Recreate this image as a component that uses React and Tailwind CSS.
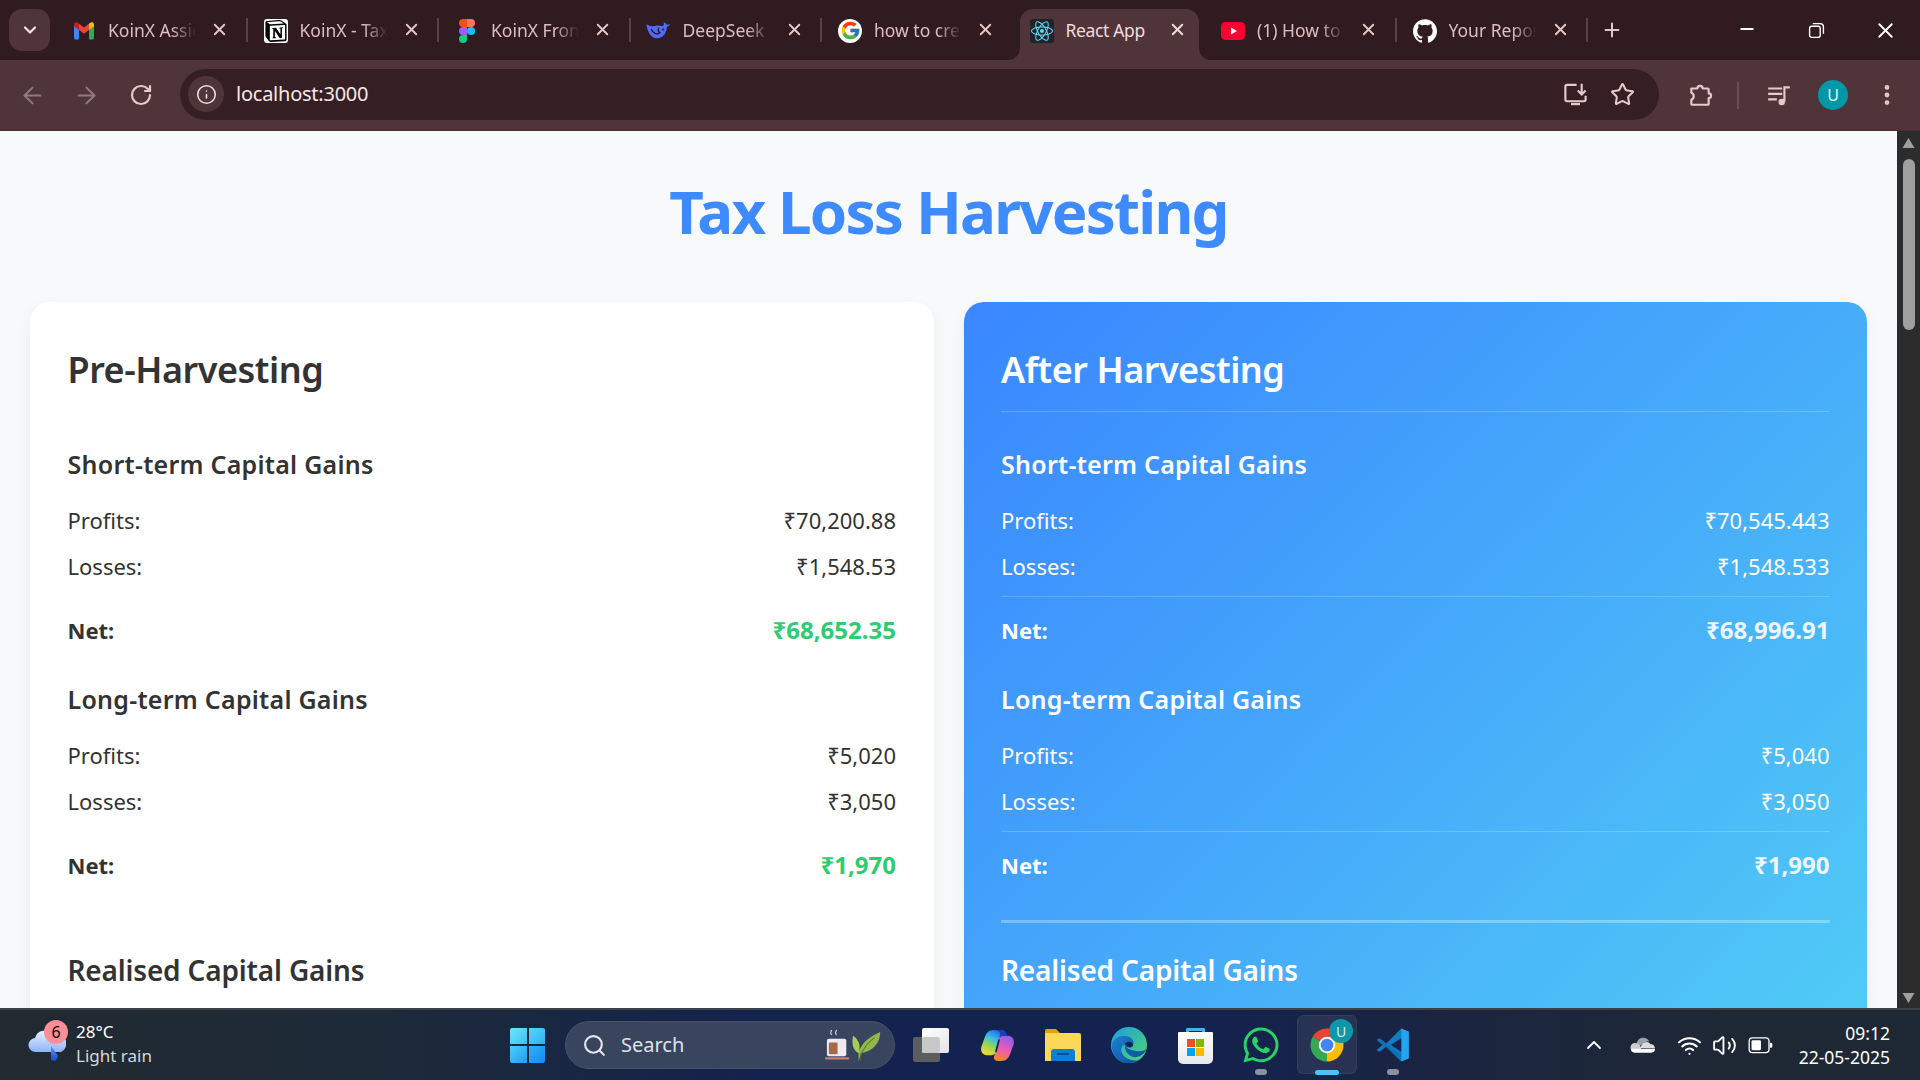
import React from "react";
import {
  ArrowLeft,
  ArrowRight,
  RotateCw,
  Info,
  Star,
  EllipsisVertical,
  Plus,
  X,
  Minus,
  ChevronDown,
  ChevronUp,
  Search,
  Wifi,
  Volume2,
} from "lucide-react";
import { FcGoogle } from "react-icons/fc";
import { FaWhatsapp } from "react-icons/fa";
import { SiNotion, SiReact, SiGithub } from "react-icons/si";

// ── Favicons ───────────────────────────────────────────────────────────────
const GmailIcon = () => (
  <svg viewBox="0 0 24 24" className="w-[24px] h-[24px]">
    <path d="M2 6v13a1.5 1.5 0 0 0 1.5 1.5H7V11z" fill="#4285F4" />
    <path d="M22 6v13a1.5 1.5 0 0 1-1.5 1.5H17V11z" fill="#34A853" />
    <path d="M7 11l5 3.7 5-3.7V4.8l-5 3.7-5-3.7z" fill="#EA4335" />
    <path d="M17 4.8V11l5-3.7V5.5c0-1.9-2.1-2.9-3.6-1.8z" fill="#FBBC04" />
    <path d="M2 5.5v1.8L7 11V4.8L5.6 3.7C4.1 2.6 2 3.6 2 5.5z" fill="#C5221F" />
  </svg>
);

const NotionIcon = () => (
  <div className="w-[24px] h-[24px] bg-white rounded-[3px] flex items-center justify-center">
    <SiNotion size={22} color="#000" />
  </div>
);

const FigmaIcon = () => (
  <svg viewBox="0 0 38 57" className="w-[16px] h-[24px]">
    <path d="M19 28.5a9.5 9.5 0 1 1 19 0 9.5 9.5 0 0 1-19 0z" fill="#1ABCFE" />
    <path d="M0 47.5A9.5 9.5 0 0 1 9.5 38H19v9.5a9.5 9.5 0 1 1-19 0z" fill="#0ACF83" />
    <path d="M19 0v19h9.5a9.5 9.5 0 1 0 0-19H19z" fill="#FF7262" />
    <path d="M0 9.5A9.5 9.5 0 0 0 9.5 19H19V0H9.5A9.5 9.5 0 0 0 0 9.5z" fill="#F24E1E" />
    <path d="M0 28.5A9.5 9.5 0 0 0 9.5 38H19V19H9.5A9.5 9.5 0 0 0 0 28.5z" fill="#A259FF" />
  </svg>
);

const DeepSeekIcon = () => (
  <svg viewBox="0 0 24 24" className="w-[25px] h-[25px]">
    <path
      d="M.5 6c2 1 4 2 6.500 2 3-1 6-1 9 0 1-1 1.500-2 1-4 1.500.5 2.500 1.500 3 2.500 1-.2 2-.5 3-1-.5 1.500-1.500 2.500-3 3 0 5-3 11-9.500 11C5 19.500 1 13 .5 6z"
      fill="#4d6bfe"
    />
    <path d="M5 10.500c1.500 4.500 6 6 8.500 3.500-2-.8-2.500-3-1-4.500" stroke="#2f1b20" strokeWidth="1.300" fill="none" />
    <circle cx="16.500" cy="11" r="1" fill="#2f1b20" />
  </svg>
);

const GoogleIcon = () => (
  <div className="w-[24px] h-[24px] rounded-full bg-white flex items-center justify-center">
    <FcGoogle size={21} />
  </div>
);

const ReactIcon = () => (
  <div className="w-[24px] h-[24px] rounded-[3px] bg-[#20232a] flex items-center justify-center">
    <SiReact size={22} color="#61dafb" />
  </div>
);

const YoutubeIcon = () => (
  <svg viewBox="0 0 24 24" className="w-[24px] h-[24px]">
    <rect x="0" y="3" width="24" height="18" rx="4.500" fill="#ff0033" />
    <path d="M10 8.500v7l6-3.500z" fill="#fff" />
  </svg>
);

const GithubIcon = () => (
  <div className="w-[24px] h-[24px] rounded-full flex items-center justify-center">
    <SiGithub size={24} color="#fff" />
  </div>
);

const TABS = [
  { title: "KoinX Assignment", icon: <GmailIcon /> },
  { title: "KoinX - Tax Loss", icon: <NotionIcon /> },
  { title: "KoinX Frontend", icon: <FigmaIcon /> },
  { title: "DeepSeek", icon: <DeepSeekIcon /> },
  { title: "how to create", icon: <GoogleIcon /> },
  { title: "React App", icon: <ReactIcon />, active: true },
  { title: "(1) How to use", icon: <YoutubeIcon /> },
  { title: "Your Repositories", icon: <GithubIcon /> },
];

// ── Browser chrome ─────────────────────────────────────────────────────────
function Tab({ title, icon, active, hideSep }) {
  return (
    <div className="relative w-[191.5px] h-[51px] shrink-0 flex items-center">
      {active && (
        <div className="absolute left-[6px] right-[6px] top-0 bottom-0 bg-[#4f353a] rounded-t-[13px]">
          <svg viewBox="0 0 12 12" className="absolute -left-[12px] bottom-0 w-[12px] h-[12px]">
            <path d="M12 0v12H0a12 12 0 0 0 12-12z" fill="#4f353a" />
          </svg>
          <svg viewBox="0 0 12 12" className="absolute -right-[12px] bottom-0 w-[12px] h-[12px]">
            <path d="M0 0v12h12A12 12 0 0 1 0 0z" fill="#4f353a" />
          </svg>
        </div>
      )}
      <div className="relative flex items-center w-full h-[42px] pl-[15px] -mt-[8px]">
        <div className="w-[26px] flex items-center justify-center shrink-0">{icon}</div>
        <div
          className={`ml-[11px] w-[88px] overflow-hidden whitespace-nowrap text-[17.5px] ${
            active
              ? "text-[#f0dcdc] tracking-[-0.02em]"
              : "text-[#dcbfc0] [mask-image:linear-gradient(90deg,#000_72%,transparent)]"
          }`}
        >
          {title}
        </div>
        <X size={19} strokeWidth={2.4} className={`ml-[14px] -mt-[2px] ${active ? "text-[#f3dddd]" : "text-[#e6c6c6]"}`} />
      </div>
      {!hideSep && <div className="absolute right-0 top-[9px] h-[24px] w-[2px] bg-[#5a4146]" />}
    </div>
  );
}

function TabStrip() {
  return (
    <div className="h-[60px] bg-[#2f1b20] flex items-start pt-[9px] shrink-0">
      <div className="ml-[9px] w-[41px] h-[42px] rounded-[13px] bg-[#4f353a] flex items-center justify-center shrink-0">
        <ChevronDown size={20} strokeWidth={2.6} className="text-[#f5e6e6]" />
      </div>
      <div className="ml-[6px] flex">
        {TABS.map((t, i) => (
          <Tab key={t.title} {...t} hideSep={t.active || TABS[i + 1]?.active} />
        ))}
      </div>
      <div className="ml-[13px] h-[42px] flex items-center">
        <Plus size={22} strokeWidth={2.2} className="text-[#e6c6c6]" />
      </div>
      <div className="ml-auto h-[42px] flex items-center text-white">
        <div className="w-[70px] flex justify-center -mt-[2px]">
          <Minus size={20} strokeWidth={2.2} />
        </div>
        <div className="w-[68px] flex justify-center">
          <svg viewBox="0 0 16 16" className="w-[17px] h-[17px]" fill="none" stroke="currentColor" strokeWidth="1.300">
            <rect x="1.500" y="4" width="10" height="10.500" rx="2" />
            <path d="M4.500 1.500h7a3 3 0 0 1 3 3V11" />
          </svg>
        </div>
        <div className="w-[70px] flex justify-center">
          <X size={25} strokeWidth={1.8} />
        </div>
      </div>
    </div>
  );
}

function Toolbar() {
  return (
    <div className="h-[71px] bg-[#4f353a] border-b border-[#46303a] flex items-center shrink-0 text-[#e6c9c9]">
      <div className="w-[180px] flex items-center shrink-0 pl-[19px]">
        <ArrowLeft size={27} strokeWidth={1.8} className="text-[#8f7a7d]" />
        <ArrowRight size={27} strokeWidth={1.8} className="ml-[27px] text-[#8f7a7d]" />
        <RotateCw size={24} strokeWidth={2.200} className="ml-[29px]" />
      </div>
      <div className="w-[1479px] h-[51px] rounded-full bg-[#361f24] flex items-center pl-[8px] pr-[24px] -mt-[2px]">
        <div className="w-[36px] h-[36px] rounded-full bg-[#4f353a] flex items-center justify-center">
          <Info size={21} strokeWidth={1.8} className="text-[#f0dfdf]" />
        </div>
        <span className="ml-[12px] text-[20px] tracking-[-0.012em] text-[#f4e9e9]">localhost:3000</span>
        <svg viewBox="0 0 24 24" className="ml-auto w-[27px] h-[27px]" fill="none" stroke="currentColor" strokeWidth="1.900">
          <path d="M13 3.500H4.500a1.500 1.500 0 0 0-1.500 1.500v11.500a1.500 1.500 0 0 0 1.500 1.500h15a1.500 1.500 0 0 0 1.500-1.500V13" />
          <path d="M17.500 2.500v9M14 8.500l3.500 3.500 3.500-3.500" />
          <rect x="8" y="19.500" width="8" height="2" fill="currentColor" stroke="none" />
        </svg>
        <Star size={25} strokeWidth={2} className="ml-[21px]" />
      </div>
      <svg viewBox="0 0 24 24" className="ml-[28px] w-[26px] h-[26px]" fill="none" stroke="currentColor" strokeWidth="2" strokeLinejoin="round">
        <path d="M4 6h5.500a2.500 2.500 0 0 1 5 0H19a1 1 0 0 1 1 1v3.500a2.200 2.200 0 0 1 0 4.400V20a1 1 0 0 1-1 1H5a1 1 0 0 1-1-1v-3.500a3.500 3.500 0 0 0 0-6.500z" />
      </svg>
      <div className="ml-[24px] w-[2px] h-[27px] bg-[#6a5055]" />
      <svg viewBox="0 0 24 24" className="ml-[27px] w-[26px] h-[26px]" fill="none" stroke="currentColor" strokeWidth="2">
        <path d="M2 6h13M2 11h13M2 16h8" />
        <path d="M17 18V5h5" />
        <circle cx="14.500" cy="18.500" r="3" fill="currentColor" stroke="none" />
      </svg>
      <div className="ml-[26px] w-[30px] h-[30px] rounded-full bg-[#0097a7] flex items-center justify-center text-[16px] text-[#e5f6f8]">
        U
      </div>
      <EllipsisVertical size={26} strokeWidth={2.4} className="ml-[26px]" />
    </div>
  );
}

// ── Page content ───────────────────────────────────────────────────────────
function Row({ label, value }) {
  return (
    <div className="h-[46px] flex items-center justify-between text-[22px]">
      <span>{label}</span>
      <span>{value}</span>
    </div>
  );
}

function GainsSection({ title, profits, losses, net, netClass }) {
  return (
    <section className="mb-[17px]">
      <h3 className="h-[40px] mb-[12px] flex items-center text-[25px] font-semibold tracking-[0.01em]">{title}</h3>
      <Row label="Profits:" value={profits} />
      <Row label="Losses:" value={losses} />
      <div className="mt-[7px] h-[67px] border-t border-white/20 flex items-center justify-between text-[22px] font-bold">
        <span>Net:</span>
        <span className={`text-[24px] ${netClass}`}>{net}</span>
      </div>
    </section>
  );
}

function Card({ title, className, netClass, short, long }) {
  return (
    <div className={`flex-1 min-w-0 rounded-[20px] px-[37.500px] pt-[37px] pb-[146px] shadow-[0_5px_15px_rgba(0,0,0,0.05)] ${className}`}>
      <h2 className="h-[73px] mb-[33px] pt-[6px] border-b border-white/20 text-[36px] font-semibold leading-[50px] tracking-[-0.013em]">
        {title}
      </h2>
      <GainsSection title="Short-term Capital Gains" netClass={netClass} {...short} />
      <GainsSection title="Long-term Capital Gains" netClass={netClass} {...long} />
      <div className="mt-[22px] h-[3px] bg-white/30" />
      <h3 className="mt-[27px] text-[28px] font-semibold leading-[40px] tracking-[-0.006em]">Realised Capital Gains</h3>
    </div>
  );
}

function Scrollbar() {
  return (
    <div className="w-[23px] shrink-0 bg-[#2c2c2c] flex flex-col items-center relative">
      <svg viewBox="0 0 12 10" className="mt-[7px] w-[13px] h-[10px]">
        <path d="M6 0l6 10H0z" fill="#9f9f9f" />
      </svg>
      <div className="mt-[11px] w-[12px] h-[171px] rounded-full bg-[#9f9f9f]" />
      <svg viewBox="0 0 12 10" className="mt-auto mb-[5px] w-[13px] h-[10px]">
        <path d="M6 10L0 0h12z" fill="#9f9f9f" />
      </svg>
    </div>
  );
}

// ── Taskbar ────────────────────────────────────────────────────────────────
const WeatherIcon = () => (
  <div className="relative w-[38px] h-[36px] shrink-0">
    <svg viewBox="0 0 38 36" className="w-[38px] h-[36px]">
      <defs>
        <linearGradient id="cloudg" x1="0" y1="0" x2="0" y2="1">
          <stop offset="0" stopColor="#e8f0ff" />
          <stop offset="1" stopColor="#8db4f7" />
        </linearGradient>
        <linearGradient id="dropg" x1="0" y1="0" x2="0" y2="1">
          <stop offset="0" stopColor="#5a93f0" />
          <stop offset="1" stopColor="#0f4fe0" />
        </linearGradient>
      </defs>
      <path d="M8 26a7 7 0 0 1-1-14 10 10 0 0 1 18-3 9 9 0 0 1 8 17z" fill="url(#cloudg)" />
      <path d="M23 20l7 10a4.500 4.500 0 0 1-7 4z" fill="url(#dropg)" />
    </svg>
    <div className="absolute -top-[6px] left-[16px] w-[24px] h-[24px] rounded-full bg-[#fb8f99] flex items-center justify-center text-[16px] text-black">
      6
    </div>
  </div>
);

const StartIcon = () => (
  <div className="grid grid-cols-2 gap-[2px] w-[35px] h-[35px] shrink-0">
    <div className="rounded-tl-[2px] bg-[linear-gradient(135deg,#6fe6ff,#3fbdf5)]" />
    <div className="rounded-tr-[2px] bg-[linear-gradient(135deg,#56d5fb,#2fb0f5)]" />
    <div className="rounded-bl-[2px] bg-[linear-gradient(135deg,#4fcdfa,#1d9ef5)]" />
    <div className="rounded-br-[2px] bg-[linear-gradient(135deg,#2eb2f8,#0f8af5)]" />
  </div>
);

const SearchDecor = () => (
  <svg viewBox="0 0 64 36" className="w-[62px] h-[35px] ml-auto">
    <path d="M8 2q-2 3 0 5M13 2q-2 3 0 5" stroke="#cfd4dc" strokeWidth="1.200" fill="none" />
    <rect x="3" y="11" width="20" height="18" rx="2" fill="#efeaf0" />
    <rect x="5" y="15" width="9" height="12" rx="1" fill="#a8694a" />
    <rect x="1" y="30" width="25" height="2.500" rx="1" fill="#c97f7a" />
    <path d="M36 34C34 22 40 12 58 4 58 16 50 24 38 26" fill="#8fb84a" />
    <path d="M36 26C31 24 28 18 30 8 36 12 38 18 36 26z" fill="#a8cc58" />
    <path d="M37 34C38 24 44 16 52 10" stroke="#4d6b22" strokeWidth="1" fill="none" />
  </svg>
);

const TaskViewIcon = () => (
  <div className="relative w-[36px] h-[34px]">
    <div className="absolute left-0 bottom-0 w-[27px] h-[25px] rounded-[2px] bg-[#5d5d5f]" />
    <div className="absolute right-0 top-0 w-[27px] h-[25px] rounded-[2px] bg-[linear-gradient(135deg,#ffffff,#e4e4e6)]" />
    <div className="absolute left-[9px] top-[9px] w-[18px] h-[16px] rounded-[2px] bg-[#c8c8ca]" />
  </div>
);

const CopilotIcon = () => (
  <svg viewBox="0 0 36 36" className="w-[35px] h-[35px]">
    <defs>
      <linearGradient id="copa" x1="0.7" y1="0" x2="0.3" y2="1">
        <stop offset="0" stopColor="#1f6fe8" />
        <stop offset="0.35" stopColor="#3fc0e0" />
        <stop offset="0.65" stopColor="#9ad84a" />
        <stop offset="1" stopColor="#f7d63a" />
      </linearGradient>
      <linearGradient id="copb" x1="0.7" y1="0" x2="0.3" y2="1">
        <stop offset="0" stopColor="#8a5cf0" />
        <stop offset="0.5" stopColor="#e85bb8" />
        <stop offset="1" stopColor="#f7853a" />
      </linearGradient>
    </defs>
    <path d="M14 2C8 2 6 6 4 12L1.500 19C0 24 3 28 7 28H12C15 28 16 26 17 23L21.500 7C22.500 4 20 2 17 2Z" fill="url(#copa)" />
    <path d="M22 34C28 34 30 30 32 24L34.500 17C36 12 33 8 29 8H24C21 8 20 10 19 13L14.500 29C13.500 32 16 34 19 34Z" fill="url(#copb)" />
    <path d="M15 2h7c3 0 5 2 6 6h-4c-2 0-3.500 1-4 3l.5-4c.5-2.500-1-5-5.500-5z" fill="#1a3fc0" />
    <path d="M19.500 12.500L16.500 24" stroke="#14224f" strokeWidth="1.800" strokeLinecap="round" />
  </svg>
);

const FolderIcon = () => (
  <svg viewBox="0 0 36 34" className="w-[36px] h-[34px]">
    <path d="M0 3a2 2 0 0 1 2-2h9l5 5H0z" fill="#e0a400" />
    <path d="M0 5h34a2 2 0 0 1 2 2v26H0z" fill="#fdd75a" />
    <path d="M6 33V24a3 3 0 0 1 3-3h18a3 3 0 0 1 3 3v9z" fill="#0f7fd4" />
    <rect x="12" y="25" width="12" height="2" fill="#0a4f8f" />
  </svg>
);

const EdgeIcon = () => (
  <svg viewBox="0 0 36 36" className="w-[36px] h-[36px]">
    <defs>
      <linearGradient id="edgea" x1="0" y1="0" x2="1" y2="1">
        <stop offset="0" stopColor="#1b9de2" />
        <stop offset="1" stopColor="#54d86a" />
      </linearGradient>
      <linearGradient id="edgeb" x1="0" y1="0" x2="1" y2="1">
        <stop offset="0" stopColor="#1d7fd1" />
        <stop offset="1" stopColor="#0c4e9a" />
      </linearGradient>
    </defs>
    <circle cx="18" cy="18" r="18" fill="url(#edgea)" />
    <path d="M1 17C4 9 14 7 20 11c4 3 3 8-1 9-4 1-6-1-5-3-5 2-5 9 0 13 5 4 13 5 17 1-5 5-13 6-18 5C5 34 0 26 1 17z" fill="url(#edgeb)" />
    <path d="M36 21c-1 2-5 4-11 3-5-1-10-2-11-7-1 5 2 11 8 13 6 1 12-3 14-9z" fill="#0f5caa" />
    <path d="M14 17c1-3 8-3 8 1 0 3-5 4-8-1z" fill="#132452" />
  </svg>
);

const StoreIcon = () => (
  <div className="relative w-[35px] h-[36px] mt-[1px]">
    <div className="absolute left-[8px] top-0 w-[19px] h-[10px] border-t-[3px] border-x-[3px] border-[#3fb6f4] rounded-t-[2px]" />
    <div className="absolute left-0 right-0 top-[4px] bottom-0 bg-[linear-gradient(180deg,#ffffff,#e9e9ec)] rounded-b-[5px] rounded-t-[1px] flex items-center justify-center">
      <div className="grid grid-cols-2 gap-[1px] w-[17px] h-[17px]">
        <div className="bg-[#f25022]" />
        <div className="bg-[#7fba00]" />
        <div className="bg-[#00a4ef]" />
        <div className="bg-[#ffb900]" />
      </div>
    </div>
  </div>
);

const ChromeIcon = () => (
  <div className="relative w-[36px] h-[36px]">
    <svg viewBox="0 0 48 48" className="w-[36px] h-[36px]">
      <path d="M24 24L4.950 13A22 22 0 0 1 43.050 13z" fill="#ea4335" />
      <path d="M24 24L43.050 13A22 22 0 0 1 24 46z" fill="#fbbc04" />
      <path d="M24 24L24 46A22 22 0 0 1 4.950 13z" fill="#34a853" />
      <circle cx="24" cy="24" r="11" fill="#fff" />
      <circle cx="24" cy="24" r="8.500" fill="#4285f4" />
    </svg>
    <div className="absolute -top-[8px] -right-[8px] w-[24px] h-[24px] rounded-full bg-[#0f96a8] flex items-center justify-center text-[14px] text-[#cdeef2]">
      U
    </div>
  </div>
);

const VSCodeIcon = () => (
  <svg viewBox="0 0 24 24" className="w-[36px] h-[36px]">
    <path d="M17.500 1L7.500 11 3 7.500 1 8.500l4 3.500-4 3.500 2 1L7.500 13l10 10 5-2.200V3.200z" fill="#0f7cc4" />
    <path d="M17.500 1l5 2.200v17.600l-5 2.200z" fill="#23a5ef" />
    <path d="M17.500 7.500L10.500 12l7 4.500z" fill="#132452" />
    <path d="M1 8.500l2-1L17.500 19v4z" fill="#0a65a8" opacity="0.400" />
  </svg>
);

const OneDriveIcon = () => (
  <svg viewBox="0 0 26 16" className="w-[25px] h-[16px]">
    <path d="M7 6a7 7 0 0 1 13-2c-3 0-5 1-6 3L7 10z" fill="#9aa0a8" />
    <path d="M5 15a4.500 4.500 0 0 1 0-9c3 0 4 1 5 2l3 7z" fill="#c9ccd1" />
    <path d="M13 7c2-3 7-3 8 0 3 0 5 2 5 4.500L10 11z" fill="#dadce0" />
    <path d="M1 12h25a4 4 0 0 1-4 4H5a4 4 0 0 1-4-4z" fill="#ffffff" />
  </svg>
);

const BatteryIcon = () => (
  <svg viewBox="0 0 26 18" className="w-[25px] h-[17px]">
    <rect x="1" y="1" width="21" height="15.500" rx="3.500" fill="none" stroke="#fff" strokeWidth="1.400" />
    <rect x="3.500" y="3.500" width="10" height="10.500" rx="1.200" fill="#fff" />
    <path d="M23 6h1a1.500 1.500 0 0 1 1.500 1.500v2.500a1.500 1.500 0 0 1-1.500 1.500h-1z" fill="#fff" />
  </svg>
);

function TaskIcon({ children, dot, active }) {
  return (
    <div className="relative w-[66px] h-[72px] flex items-center justify-center shrink-0">
      {active && (
        <div className="absolute left-[3px] right-[3px] top-[6px] bottom-[7px] rounded-[6px] bg-white/[0.07] border border-white/5" />
      )}
      <div className="relative">{children}</div>
      {dot && <div className="absolute bottom-[6px] left-[27px] w-[12px] h-[6px] rounded-full bg-[#8b919c]" />}
      {active && <div className="absolute bottom-[6px] left-[21px] w-[24px] h-[5px] rounded-full bg-[#4cc2ff]" />}
    </div>
  );
}

function Taskbar() {
  return (
    <div className="h-[72px] shrink-0 border-t-[2px] border-[#3b4149] bg-[linear-gradient(90deg,#222a31_0%,#1d2a38_20%,#14224f_40%,#14224f_62%,#1b2540_76%,#1e2834_90%)] flex items-center text-white">
      <div className="w-[510px] shrink-0 flex items-center pl-[28px] -mt-[2px]">
        <WeatherIcon />
        <div className="ml-[10px] flex flex-col text-[17px] leading-[24px]">
          <span>28°C</span>
          <span className="text-[#d5d8dc]">Light rain</span>
        </div>
      </div>
      <StartIcon />
      <div className="ml-[20px] w-[330px] h-[48px] rounded-full border border-[#4a5468] bg-[#39445f] flex items-center pl-[16px] pr-[8px]">
        <Search size={25} strokeWidth={2} className="text-[#e6e8ee]" />
        <span className="ml-[14px] text-[20px] text-[#dfe2e8]">Search</span>
        <SearchDecor />
      </div>
      <div className="ml-[3px] flex items-center">
        <TaskIcon><TaskViewIcon /></TaskIcon>
        <TaskIcon><CopilotIcon /></TaskIcon>
        <TaskIcon><FolderIcon /></TaskIcon>
        <TaskIcon><EdgeIcon /></TaskIcon>
        <TaskIcon><StoreIcon /></TaskIcon>
        <TaskIcon dot><FaWhatsapp size={40} color="#25d366" /></TaskIcon>
        <TaskIcon active><ChromeIcon /></TaskIcon>
        <TaskIcon dot><VSCodeIcon /></TaskIcon>
      </div>
      <div className="ml-auto flex items-center pr-[30px]">
        <ChevronUp size={24} strokeWidth={1.8} />
        <div className="ml-[24px]"><OneDriveIcon /></div>
        <Wifi size={25} strokeWidth={2} className="ml-[22px]" />
        <Volume2 size={25} strokeWidth={1.8} className="ml-[10px]" />
        <div className="ml-[11px]"><BatteryIcon /></div>
        <div className="ml-[26px] flex flex-col items-end text-[17.500px] leading-[24px]">
          <span>09:12</span>
          <span>22-05-2025</span>
        </div>
      </div>
    </div>
  );
}

// ── App ────────────────────────────────────────────────────────────────────
export default function App() {
  return (
    <div className="w-screen h-screen overflow-hidden flex flex-col font-['Noto_Sans',sans-serif]">
      <TabStrip />
      <Toolbar />
      <div className="flex-1 min-h-0 flex bg-[#f8f9fa] overflow-hidden">
        <main className="flex-1 min-w-0 px-[30px] text-[#333]">
          <h1 className="h-[171px] pt-[39px] text-center text-[60px] font-bold leading-[82px] tracking-[-0.03em] text-[#3d8bff]">
            Tax Loss Harvesting
          </h1>
          <div className="flex gap-[30px] items-start">
            <Card
              title="Pre-Harvesting"
              className="bg-white text-[#333]"
              netClass="text-[#2ecc71]"
              short={{ profits: "₹70,200.88", losses: "₹1,548.53", net: "₹68,652.35" }}
              long={{ profits: "₹5,020", losses: "₹3,050", net: "₹1,970" }}
            />
            <Card
              title="After Harvesting"
              className="bg-[linear-gradient(135deg,#3a86ff,#52d0f5)] text-white"
              netClass="text-[#eef6ff]"
              short={{ profits: "₹70,545.443", losses: "₹1,548.533", net: "₹68,996.91" }}
              long={{ profits: "₹5,040", losses: "₹3,050", net: "₹1,990" }}
            />
          </div>
        </main>
        <Scrollbar />
      </div>
      <Taskbar />
    </div>
  );
}
